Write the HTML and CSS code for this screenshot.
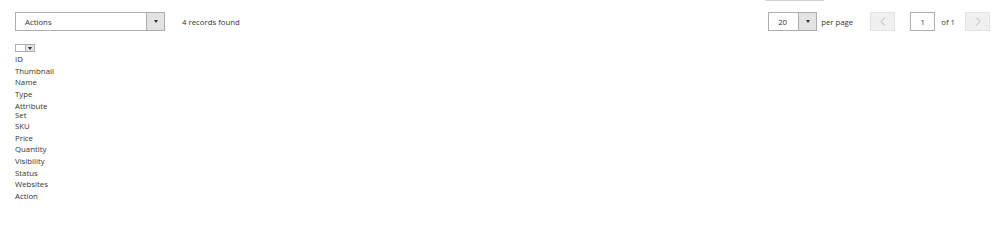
FILE: index.html
```html
<!DOCTYPE html>
<html lang="en">
<head>
<meta charset="utf-8">
<title>Products grid</title>
<link rel="stylesheet" href="styles.css">
</head>
<body>
<div class="toolbar">
  <div class="left">
    <div class="select actions">
      <span class="select-label">Actions</span>
      <span class="select-btn"><i class="caret"></i></span>
    </div>
    <span class="count">4 records found</span>
  </div>
  <div class="right">
    <div class="perpage-wrap">
      <div class="topline"></div>
      <div class="perpage-row">
        <div class="select perpage">
          <span class="select-label">20</span>
          <span class="select-btn"><i class="caret"></i></span>
        </div>
        <span class="perpage-text">per page</span>
      </div>
    </div>
    <div class="pager">
      <button class="nav prev" type="button" aria-label="Previous page">
        <svg width="6" height="9" viewBox="0 0 6 9"><polyline points="5,0.5 1,4.5 5,8.5" fill="none" stroke="#b5b5b5" stroke-width="1"/></svg>
      </button>
      <span class="page-input">1</span>
      <span class="of">of 1</span>
      <button class="nav next" type="button" aria-label="Next page">
        <svg width="6" height="9" viewBox="0 0 6 9"><polyline points="1,0.5 5,4.5 1,8.5" fill="none" stroke="#b5b5b5" stroke-width="1"/></svg>
      </button>
    </div>
  </div>
</div>
<div class="mass-select">
  <span class="ms-box"></span><span class="ms-btn"><i class="caret small"></i></span>
</div>
<ul class="columns">
  <li>ID</li>
  <li>Thumbnail</li>
  <li>Name</li>
  <li>Type</li>
  <li>Attribute<br>Set</li>
  <li>SKU</li>
  <li>Price</li>
  <li>Quantity</li>
  <li>Visibility</li>
  <li>Status</li>
  <li>Websites</li>
  <li>Action</li>
</ul>
</body>
</html>
```
FILE: styles.css
```css
html, body {
  margin: 0;
  padding: 0;
  background: #ffffff;
}
body {
  font-family: "Open Sans", "Liberation Sans", sans-serif;
  font-size: 7.8px;
  color: #333333;
}
.toolbar {
  display: flex;
  justify-content: space-between;
  align-items: flex-end;
  padding: 0 9px 0 15px;
}
.left {
  display: flex;
  align-items: center;
}
.select {
  display: flex;
  height: 19px;
  border: 1px solid #adadad;
  box-sizing: border-box;
  background: #fff;
}
.select-label {
  flex: 1;
  display: flex;
  align-items: center;
}
.select-btn {
  width: 17px;
  background: #e3e3e3;
  border-left: 1px solid #adadad;
  display: flex;
  align-items: center;
  justify-content: center;
}
.caret {
  width: 0;
  height: 0;
  border-left: 2.5px solid transparent;
  border-right: 2.5px solid transparent;
  border-top: 3px solid #303030;
}
.actions {
  width: 150px;
}
.actions .select-label {
  padding-left: 9px;
}
.count {
  margin-left: 17px;
}
.right {
  display: flex;
  align-items: flex-end;
}
.perpage-wrap {
  display: flex;
  flex-direction: column;
}
.topline {
  width: 59px;
  height: 1px;
  background: #d3d3d3;
  margin-left: -3px;
  margin-bottom: 11px;
}
.perpage-row {
  display: flex;
  align-items: center;
}
.perpage {
  width: 49px;
}
.perpage .select-label {
  padding-left: 9px;
}
.perpage-text {
  margin-left: 4px;
}
.pager {
  display: flex;
  align-items: center;
  margin-left: 17px;
}
.nav {
  width: 25px;
  height: 19px;
  background: #f0f0f0;
  border: 1px solid #e3e3e3;
  box-sizing: border-box;
  padding: 0;
  display: flex;
  align-items: center;
  justify-content: center;
}
.page-input {
  width: 25px;
  height: 19px;
  box-sizing: border-box;
  border: 1px solid #adadad;
  margin-left: 15px;
  display: flex;
  align-items: center;
  justify-content: center;
}
.of {
  margin-left: 6px;
  margin-right: 10px;
}
.mass-select {
  display: flex;
  margin: 13px 0 0 15px;
  height: 8px;
}
.ms-box {
  width: 9px;
  border: 1px solid #adadad;
  border-right: none;
  background: #fff;
}
.ms-btn {
  width: 8px;
  border: 1px solid #adadad;
  background: #e3e3e3;
  display: flex;
  align-items: center;
  justify-content: center;
}
.caret.small {
  border-left-width: 2px;
  border-right-width: 2px;
  border-top-width: 3px;
}
.columns {
  list-style: none;
  margin: 2px 0 0 15px;
  padding: 0;
}
.columns li {
  line-height: 9px;
  padding: 1.3px 0;
}
```
